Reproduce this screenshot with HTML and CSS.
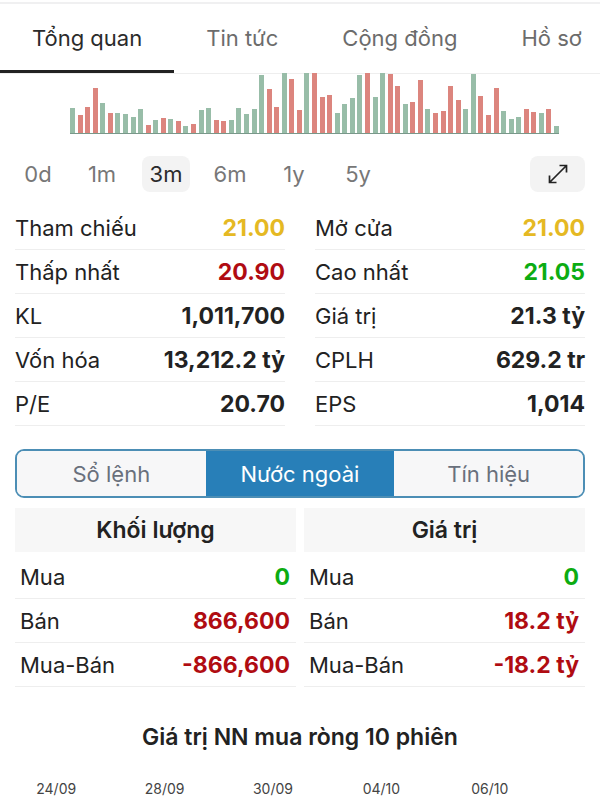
FILE: index.html
```
<!DOCTYPE html>
<html lang="vi">
<head>
<meta charset="utf-8">
<meta name="viewport" content="width=device-width, initial-scale=1">
<title>Tổng quan</title>
<link rel="stylesheet" href="styles.css">
</head>
<body>
<nav class="tabs">
  <a class="tab tab-active" href="#">Tổng quan</a>
  <a class="tab" href="#">Tin tức</a>
  <a class="tab" href="#">Cộng đồng</a>
  <a class="tab" href="#">Hồ sơ</a>
</nav>
<main>
  <div class="volume" id="volume"></div>
  <div class="ranges">
    <button class="range">0d</button>
    <button class="range">1m</button>
    <button class="range range-active">3m</button>
    <button class="range">6m</button>
    <button class="range">1y</button>
    <button class="range">5y</button>
    <button class="expand" aria-label="Mở rộng">
      <svg width="20" height="20" viewBox="0 0 20 20" fill="none" stroke="currentColor" stroke-width="1.7"><path d="M1.500 18.500L18.500 1.500M11.500 1.500H18.500V8.500M1.500 11.500V18.500H8.500"/></svg>
    </button>
  </div>
  <div class="stats">
    <dl class="list">
      <div class="row"><dt>Tham chiếu</dt><dd class="yellow">21.00</dd></div>
      <div class="row"><dt>Thấp nhất</dt><dd class="red">20.90</dd></div>
      <div class="row"><dt>KL</dt><dd>1,011,700</dd></div>
      <div class="row"><dt>Vốn hóa</dt><dd>13,212.2 tỷ</dd></div>
      <div class="row"><dt>P/E</dt><dd>20.70</dd></div>
    </dl>
    <dl class="list">
      <div class="row"><dt>Mở cửa</dt><dd class="yellow">21.00</dd></div>
      <div class="row"><dt>Cao nhất</dt><dd class="green">21.05</dd></div>
      <div class="row"><dt>Giá trị</dt><dd>21.3 tỷ</dd></div>
      <div class="row"><dt>CPLH</dt><dd>629.2 tr</dd></div>
      <div class="row"><dt>EPS</dt><dd>1,014</dd></div>
    </dl>
  </div>
  <div class="segments">
    <button class="segment">Sổ lệnh</button>
    <button class="segment segment-active">Nước ngoài</button>
    <button class="segment">Tín hiệu</button>
  </div>
  <div class="foreign">
    <section>
      <h2 class="heading">Khối lượng</h2>
      <dl class="list list-inset">
        <div class="row"><dt>Mua</dt><dd class="green">0</dd></div>
        <div class="row"><dt>Bán</dt><dd class="red">866,600</dd></div>
        <div class="row"><dt>Mua-Bán</dt><dd class="red">-866,600</dd></div>
      </dl>
    </section>
    <section>
      <h2 class="heading">Giá trị</h2>
      <dl class="list list-inset">
        <div class="row"><dt>Mua</dt><dd class="green">0</dd></div>
        <div class="row"><dt>Bán</dt><dd class="red">18.2 tỷ</dd></div>
        <div class="row"><dt>Mua-Bán</dt><dd class="red">-18.2 tỷ</dd></div>
      </dl>
    </section>
  </div>
  <h2 class="title">Giá trị NN mua ròng 10 phiên</h2>
  <div class="dates"><span>24/09</span><span>28/09</span><span>30/09</span><span>04/10</span><span>06/10</span></div>
</main>
<script src="chart.js"></script>
</body>
</html>
```
FILE: styles.css
```
* { box-sizing: border-box; }
body {
  margin: 0;
  padding-top: 2px;
  background: #fff;
  color: #222;
  font: 22px/28px Inter, "Liberation Sans", sans-serif;
  overflow-x: hidden;
}
button { font: inherit; border: 0; padding: 0; }
dl, dd, h2 { margin: 0; }
.tabs {
  display: flex;
  height: 72px;
  border-top: 2px solid #f0f0f1;
  border-bottom: 1px solid #eee;
  overflow: hidden;
}
.tab {
  flex: none;
  padding: 20px 32px 0;
  color: #6c6c6c;
  text-decoration: none;
  white-space: nowrap;
}
.tab-active { color: #2b2b2b; border-bottom: 3px solid #222; }
.volume {
  display: flex;
  align-items: flex-end;
  justify-content: space-between;
  height: 60px;
  margin: 0 41px 0 70px;
  border-bottom: 1px solid #79988a;
}
.bar { width: 5px; background: #98bda8; }
.bar-down { background: #dc857e; }
.ranges {
  display: flex;
  gap: 16px;
  height: 36px;
  margin: 22px 15px 0 14px;
}
.range { width: 48px; border-radius: 8px; background: none; color: #777; }
.range-active { background: #f3f3f3; color: #2b2b2b; }
.expand {
  display: flex;
  align-items: center;
  justify-content: center;
  width: 55px;
  margin-left: auto;
  border-radius: 8px;
  background: #f3f3f3;
  color: #222;
}
.stats {
  display: grid;
  grid-template-columns: 1fr 1fr;
  gap: 30px;
  margin: 14px 15px 0;
}
.row {
  display: flex;
  align-items: center;
  justify-content: space-between;
  height: 44px;
  border-bottom: 1px solid #eee;
  white-space: nowrap;
}
dd {
  font-size: 23px;
  font-weight: 700;
}
.list-inset .row { padding: 0 6px 0 5px; }
.yellow { color: #e5b923; }
.red { color: #b00c12; }
.green { color: #0cac12; }
.segments {
  display: grid;
  grid-template-columns: repeat(3, 1fr);
  height: 49px;
  margin: 23px 15px 0;
  border: 2px solid #4c8eb5;
  border-radius: 9px;
  overflow: hidden;
}
.segment { background: #f7f7f8; color: #69707c; }
.segment-active { background: #287fb8; color: #fff; }
.foreign {
  display: grid;
  grid-template-columns: 1fr 1fr;
  gap: 8px;
  margin: 10px 15px 0;
}
.heading {
  margin-bottom: 3px;
  padding: 8px 0;
  background: #f7f7f7;
  font-size: 23px;
  font-weight: 600;
  text-align: center;
}
.title {
  margin-top: 36px;
  font-size: 23px;
  font-weight: 600;
  text-align: center;
}
.dates {
  display: grid;
  grid-template-columns: repeat(5, 1fr);
  margin: 28px 56px 0 2px;
  color: #444;
  font-size: 14px;
  line-height: 20px;
  text-align: center;
}
```
FILE: chart.js
```
// Daily volume: height in pixels, prefixed by g (up day) or r (down day).
const days = (
  "g25 r18 r26 r45 g30 r20 g20 g19 g16 g24 r8 g13 r15 g14 r12 g7 r9 g23 g25 r13 r12 " +
  "g13 g25 g19 g24 g58 r44 r26 g60 r54 r23 g60 r60 r36 r38 g20 g29 g35 g58 r60 g36 g60 r59 " +
  "r47 g29 r31 r53 g24 r20 r22 r47 r33 g24 g59 r37 r18 r45 g22 g14 g16 r24 r21 g20 r24 g7"
).split(" ");
const volume = document.getElementById("volume");
for (const day of days) {
  const bar = document.createElement("span");
  bar.className = day[0] === "r" ? "bar bar-down" : "bar";
  bar.style.height = day.slice(1) + "px";
  volume.append(bar);
}
```
